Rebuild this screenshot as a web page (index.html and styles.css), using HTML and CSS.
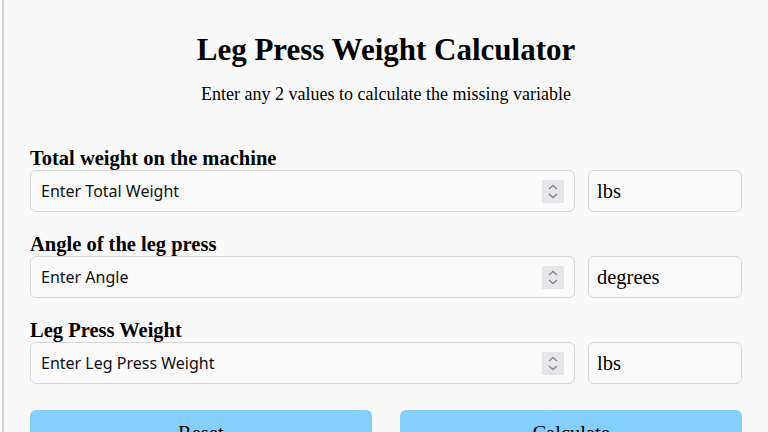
FILE: index.html
```html
<!DOCTYPE html>
<html lang="en">
<head>
<meta charset="utf-8">
<title>Leg Press Weight Calculator</title>
<link rel="stylesheet" href="styles.css">
</head>
<body>
<div class="page">
  <h1 class="title">Leg Press Weight Calculator</h1>
  <p class="subtitle">Enter any 2 values to calculate the missing variable</p>

  <div class="fields">
    <div class="field">
      <label class="label">Total weight on the machine</label>
      <div class="row">
        <div class="num">
          <input class="input" type="text" placeholder="Enter Total Weight">
          <span class="spin"><svg width="22" height="23" viewBox="0 0 22 23"><path d="M7 9 L11 5.5 L15 9" fill="none" stroke="#8a8a92" stroke-width="1.5"/><path d="M7 14 L11 17.5 L15 14" fill="none" stroke="#8a8a92" stroke-width="1.5"/></svg></span>
        </div>
        <div class="unit">lbs</div>
      </div>
    </div>

    <div class="field">
      <label class="label">Angle of the leg press</label>
      <div class="row">
        <div class="num">
          <input class="input" type="text" placeholder="Enter Angle">
          <span class="spin"><svg width="22" height="23" viewBox="0 0 22 23"><path d="M7 9 L11 5.5 L15 9" fill="none" stroke="#8a8a92" stroke-width="1.5"/><path d="M7 14 L11 17.5 L15 14" fill="none" stroke="#8a8a92" stroke-width="1.5"/></svg></span>
        </div>
        <div class="unit">degrees</div>
      </div>
    </div>

    <div class="field">
      <label class="label">Leg Press Weight</label>
      <div class="row">
        <div class="num">
          <input class="input" type="text" placeholder="Enter Leg Press Weight">
          <span class="spin"><svg width="22" height="23" viewBox="0 0 22 23"><path d="M7 9 L11 5.5 L15 9" fill="none" stroke="#8a8a92" stroke-width="1.5"/><path d="M7 14 L11 17.5 L15 14" fill="none" stroke="#8a8a92" stroke-width="1.5"/></svg></span>
        </div>
        <div class="unit">lbs</div>
      </div>
    </div>
  </div>

  <div class="buttons">
    <button class="btn">Reset</button>
    <button class="btn">Calculate</button>
  </div>
</div>
</body>
</html>
```

FILE: styles.css
```css
html, body {
  margin: 0;
  padding: 0;
  background: #ffffff;
  height: 100%;
  overflow: hidden;
}
.page {
  margin-left: 2px;
  border-left: 2px solid #d4d4d4;
  background: #f9f9f9;
  padding: 26px 26px 0 26px;
  min-height: 100%;
  box-sizing: border-box;
  font-family: "Liberation Serif", "Times New Roman", serif;
  color: #000;
}
.title {
  margin: 6px 0 0 0;
  text-align: center;
  font-size: 31px;
  font-weight: bold;
  line-height: 36px;
}
.subtitle {
  margin: 16px 0 0 0;
  text-align: center;
  font-size: 18px;
  line-height: 21px;
}
.fields {
  margin-top: 42px;
  display: flex;
  flex-direction: column;
  gap: 21px;
}
.label {
  display: block;
  font-size: 20.5px;
  font-weight: bold;
  line-height: 23px;
}
.row {
  display: flex;
  gap: 13px;
}
.num {
  position: relative;
  flex: 1;
  display: flex;
}
.input {
  flex: 1;
  height: 42px;
  box-sizing: border-box;
  border: 1px solid #d6d6d6;
  border-radius: 6px;
  background: #fafafa;
  padding: 0 10px;
  font-family: "Noto Sans", sans-serif;
  font-size: 16px;
  color: #000;
  outline: none;
}
.input::placeholder {
  color: #111;
}
.spin {
  position: absolute;
  right: 11px;
  top: 10px;
  width: 22px;
  height: 23px;
  background: #e5e5ea;
  display: flex;
}
.unit {
  width: 154px;
  height: 42px;
  box-sizing: border-box;
  border: 1px solid #d6d6d6;
  border-radius: 6px;
  background: #fafafa;
  padding: 0 8px;
  display: flex;
  align-items: center;
  font-size: 20.5px;
}
.buttons {
  margin-top: 26px;
  display: flex;
  justify-content: space-between;
}
.btn {
  width: 48%;
  background: #85cffd;
  border: none;
  border-radius: 6px;
  padding: 12px 0;
  font-family: "Liberation Serif", "Times New Roman", serif;
  font-size: 20.5px;
  color: #000;
}
```
